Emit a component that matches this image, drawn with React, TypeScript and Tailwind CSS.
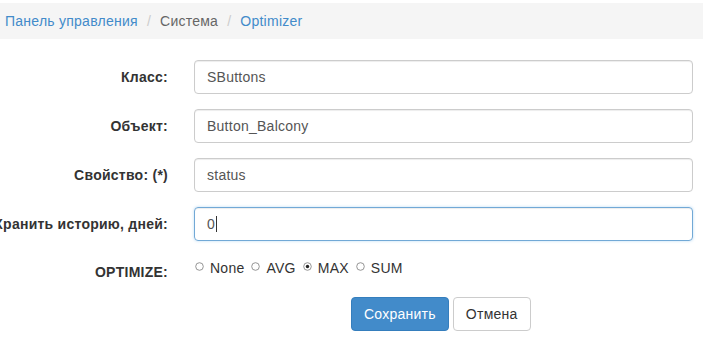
import React from "react";

const fields = [
  { label: "Класс:", value: "SButtons" },
  { label: "Объект:", value: "Button_Balcony" },
  { label: "Свойство: (*)", value: "status" },
];

const options = [
  { name: "None", checked: false },
  { name: "AVG", checked: false },
  { name: "MAX", checked: true },
  { name: "SUM", checked: false },
];

function Radio({ checked }: { checked: boolean }) {
  return (
    <svg width="9" height="9" viewBox="0 0 9 9" className="shrink-0 -mt-[4px]">
      <circle cx="4.5" cy="4.5" r="3.8" fill="#fff" stroke="#8a8a8a" strokeWidth="0.9" />
      {checked && <circle cx="4.5" cy="4.5" r="1.7" fill="#222" />}
    </svg>
  );
}

function Label({ children }: { children: React.ReactNode }) {
  return (
    <div className="flex justify-end items-center h-[34px] whitespace-nowrap font-bold text-[14px] text-[#333]">
      {children}
    </div>
  );
}

export default function App() {
  return (
    <div
      className="w-[703px] h-[343px] bg-white overflow-hidden text-[14px] leading-5 tracking-[0.25px]"
      style={{ fontFamily: '"Liberation Sans", Arial, sans-serif' }}
    >
      {/* breadcrumb */}
      <div className="mt-[3px] h-[36px] bg-[#f5f5f5] flex items-center pl-[5px]">
        <span className="text-[#428bca]">Панель управления</span>
        <span className="text-[#ccc] px-[9px]">/</span>
        <span className="text-[#666]">Система</span>
        <span className="text-[#ccc] px-[9px]">/</span>
        <span className="text-[#428bca]">Optimizer</span>
      </div>

      <div className="mt-[21px] grid grid-cols-[168px_499px] gap-x-[26px] gap-y-[15px]">
        {fields.map((f) => (
          <React.Fragment key={f.label}>
            <Label>{f.label}</Label>
            <div className="h-[34px] border border-[#ccc] rounded-[4px] px-[12px] flex items-center text-[#555] shadow-[inset_0_1px_1px_rgba(0,0,0,0.075)]">
              {f.value}
            </div>
          </React.Fragment>
        ))}

        <Label>Хранить историю, дней:</Label>
        <div className="h-[34px] border border-[#72a9d6] rounded-[4px] px-[12px] flex items-center text-[#555] shadow-[inset_0_1px_1px_rgba(0,0,0,0.075),0_0_3px_rgba(102,175,233,0.45)]">
          0<span className="w-px h-[16px] bg-[#333] ml-px" />
        </div>

        <div className="flex justify-end items-start pt-[6px] h-[26px] whitespace-nowrap font-bold text-[#333]">
          OPTIMIZE:
        </div>
        <div className="flex items-center h-[26px] pb-[2px] pl-[1px] text-[#333]">
          {options.map((o) => (
            <div key={o.name} className="flex items-center mr-[7px]">
              <Radio checked={o.checked} />
              <span className="ml-[6px]">{o.name}</span>
            </div>
          ))}
        </div>
      </div>

      <div className="mt-[15px] flex gap-[4px] pl-[351px]">
        <button className="h-[34px] px-[12px] rounded-[4px] bg-[#428bca] border border-[#357ebd] text-white">
          Сохранить
        </button>
        <button className="h-[34px] px-[12px] rounded-[4px] bg-white border border-[#ccc] text-[#333]">
          Отмена
        </button>
      </div>
    </div>
  );
}
